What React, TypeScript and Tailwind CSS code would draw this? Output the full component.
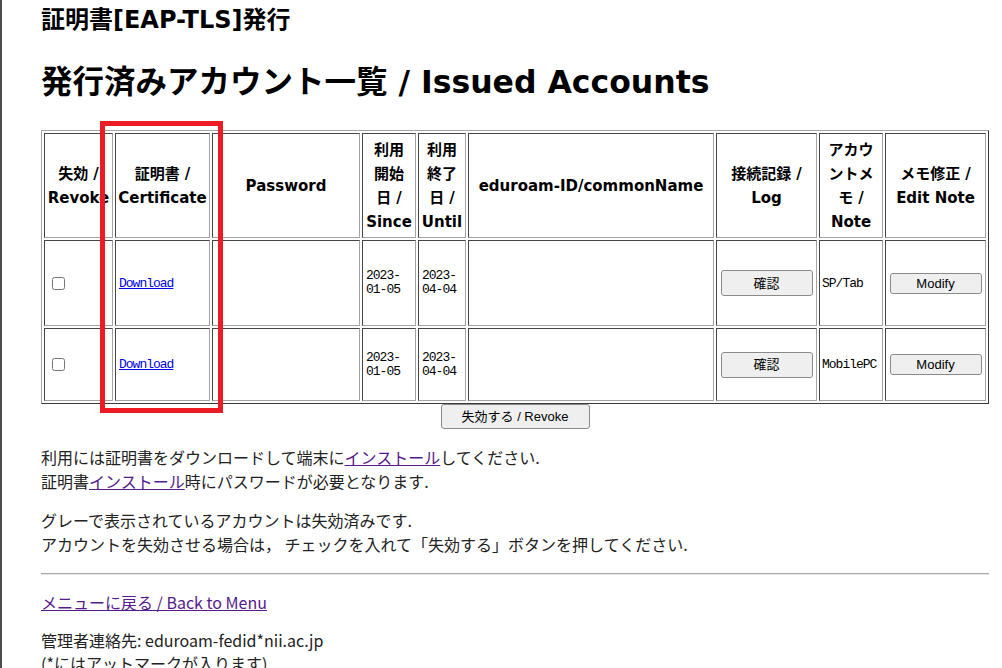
import type { ReactNode } from 'react'

const HEAD_FONT = 'font-["DejaVu_Sans","Noto_Sans_CJK_JP",sans-serif]'
const BODY_FONT = 'font-["Noto_Sans_CJK_JP","Noto_Sans",sans-serif]'
const MONO = 'font-["Liberation_Mono","DejaVu_Sans_Mono",monospace] text-[13px] tracking-[-1px]'
const BTN_FONT = 'font-["Liberation_Sans","Noto_Sans_CJK_JP",sans-serif]'

const cell = 'border border-t-[#454545] border-l-[#454545] border-r-[#a3a3a3] border-b-[#a3a3a3] p-[1px] align-middle'

const widths = ['w-[69px]', 'w-[95px]', 'w-[148px]', 'w-[54px]', 'w-[48px]', 'w-[246px]', 'w-[101px]', 'w-[64px]', 'w-[101px]']

const rows = [
  { since: ['2023-', '01-05'], until: ['2023-', '04-04'], note: 'SP/Tab', h: 'h-[86px]' },
  { since: ['2023-', '01-05'], until: ['2023-', '04-04'], note: 'MobilePC', h: 'h-[73px]' },
]

export default function App() {
  return (
    <div className="flex h-[668px] overflow-hidden bg-white text-black">
      <div className="w-[2px] shrink-0 bg-[#4d4d4d]" />
      <div className="relative ml-[39px] w-[948px] shrink-0">
        <h2 className={`${HEAD_FONT} pt-[5px] text-[24px] leading-[30px] font-bold`}>証明書[EAP-TLS]発行</h2>
        <h1 className={`${HEAD_FONT} mt-[27px] text-[31.5px] leading-[40px] font-bold`}>発行済みアカウント一覧 / Issued Accounts</h1>

        <table className="mt-[28px] w-[948px] table-fixed border-separate border-spacing-[2px] border border-t-[#a3a3a3] border-l-[#a3a3a3] border-r-[#3a3a3a] border-b-[#3a3a3a]">
          <colgroup>
            {widths.map((w, i) => <col key={i} className={w} />)}
          </colgroup>
          <thead>
            <tr className="h-[105px]">
              <Th>失効 /<br />Revoke</Th>
              <Th>証明書 /<br />Certificate</Th>
              <Th>Password</Th>
              <Th>利用<br />開始<br />日 /<br />Since</Th>
              <Th>利用<br />終了<br />日 /<br />Until</Th>
              <Th>eduroam-ID/commonName</Th>
              <Th>接続記録 /<br />Log</Th>
              <Th>アカウ<br />ントメ<br />モ /<br />Note</Th>
              <Th>メモ修正 /<br />Edit Note</Th>
            </tr>
          </thead>
          <tbody>
            {rows.map((r, i) => (
              <tr key={i} className={r.h}>
                <td className={cell}>
                  <input type="checkbox" className="ml-[6px] block h-[13px] w-[13px]" />
                </td>
                <td className={`${cell} ${MONO} leading-[15px]`}>
                  <a href="#" className="ml-[2px] text-[#0000ee] underline">Download</a>
                </td>
                <td className={cell} />
                <td className={`${cell} ${MONO} pl-[3px] leading-[14px]`}>{r.since[0]}<br />{r.since[1]}</td>
                <td className={`${cell} ${MONO} pl-[3px] leading-[14px]`}>{r.until[0]}<br />{r.until[1]}</td>
                <td className={cell} />
                <td className={cell}>
                  <Btn className="mx-auto h-[26px] w-[92px]">確認</Btn>
                </td>
                <td className={`${cell} ${MONO} pl-[2px] leading-[15px]`}>{r.note}</td>
                <td className={cell}>
                  <Btn className="mx-auto h-[21px] w-[92px]">Modify</Btn>
                </td>
              </tr>
            ))}
          </tbody>
        </table>

        <Btn className="mx-auto h-[25px] w-[149px]">失効する / Revoke</Btn>

        <div className={`${BODY_FONT} text-[16px] leading-[24px] text-[#222]`}>
          <p className="mt-[16px]">
            利用には証明書をダウンロードして端末に<a href="#" className="text-[#551a8b] underline">インストール</a>してください.<br />
            証明書<a href="#" className="text-[#551a8b] underline">インストール</a>時にパスワードが必要となります.
          </p>
          <p className="mt-[16px] leading-[23.5px]">
            グレーで表示されているアカウントは失効済みです.<br />
            アカウントを失効させる場合は， チェックを入れて「失効する」ボタンを押してください.
          </p>
          <hr className="mt-[17px] h-[2px] border-t border-b border-t-[#a8a8a8] border-b-[#e6e6e6]" />
          <p className="mt-[15px]">
            <a href="#" className="text-[#551a8b] underline">メニューに戻る / Back to Menu</a>
          </p>
          <p className="mt-[15px] leading-[23px]">
            管理者連絡先: eduroam-fedid*nii.ac.jp<br />
            (*にはアットマークが入ります)
          </p>
        </div>

        <div className="pointer-events-none absolute left-[59px] top-[121px] h-[292px] w-[123px] border-[5px] border-[#ed1c24]" />
      </div>
    </div>
  )
}

function Th({ children }: { children: ReactNode }) {
  return (
    <th className={`${cell} ${HEAD_FONT} whitespace-nowrap text-center text-[15px] leading-[24px] font-bold`}>
      {children}
    </th>
  )
}

function Btn({ children, className }: { children: ReactNode; className?: string }) {
  return (
    <button className={`${BTN_FONT} ${className ?? ''} flex items-center justify-center rounded-[3px] border border-[#8a8a8a] bg-[#efefef] text-[13px] leading-none text-black`}>
      {children}
    </button>
  )
}
